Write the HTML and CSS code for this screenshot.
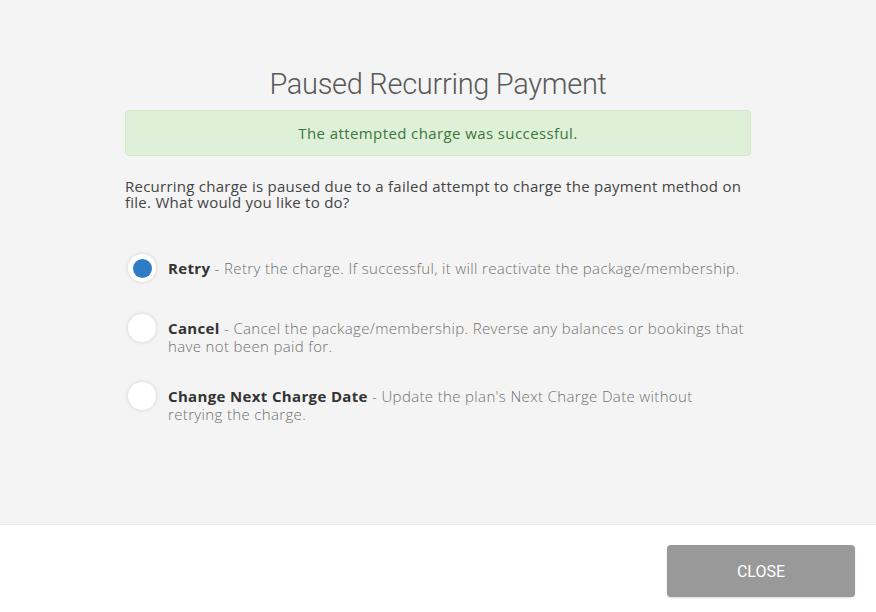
FILE: index.html
```html
<!DOCTYPE html>
<html>
<head>
<meta charset="utf-8">
<link rel="stylesheet" href="styles.css">
</head>
<body>
<div class="modal">
  <div class="modal-body">
    <div class="content">
      <h1 class="title">Paused Recurring Payment</h1>
      <div class="alert">The attempted charge was successful.</div>
      <p class="intro">Recurring charge is paused due to a failed attempt to charge the payment method on file. What would you like to do?</p>
      <div class="options">
        <label class="option">
          <span class="radio checked"><span class="dot"></span></span>
          <span class="text"><b>Retry</b> - Retry the charge. If successful, it will reactivate the package/membership.</span>
        </label>
        <label class="option">
          <span class="radio"></span>
          <span class="text"><b>Cancel</b> - Cancel the package/membership. Reverse any balances or bookings that have not been paid for.</span>
        </label>
        <label class="option">
          <span class="radio"></span>
          <span class="text"><b>Change Next Charge Date</b> - Update the plan's Next Charge Date without retrying the charge.</span>
        </label>
      </div>
    </div>
  </div>
  <div class="modal-footer">
    <button class="close-btn">CLOSE</button>
  </div>
</div>
</body>
</html>
```
FILE: styles.css
```css
* { box-sizing: border-box; }
html, body { margin: 0; padding: 0; }
body {
  font-family: "Open Sans", "Liberation Sans", sans-serif;
  background: #fff;
  width: 876px;
  height: 612px;
  overflow: hidden;
}
.modal {
  display: flex;
  flex-direction: column;
  height: 612px;
}
.modal-body {
  background: #f4f4f4;
  height: 525px;
  border-bottom: 1px solid #ebebeb;
  padding-top: 64px;
}
.content {
  width: 626px;
  margin: 0 auto;
}
.title {
  margin: 0;
  font-family: Roboto, "Liberation Sans", sans-serif;
  font-weight: 300;
  font-size: 29px;
  line-height: 40px;
  color: #595959;
  text-align: center;
  letter-spacing: -0.3px;
}
.alert {
  margin-top: 6px;
  height: 46px;
  background: #dff0d8;
  border: 1px solid #d6e9c6;
  border-radius: 4px;
  color: #3c763d;
  font-size: 15px;
  letter-spacing: 0.4px;
  display: flex;
  align-items: center;
  justify-content: center;
}
.intro {
  margin: 22px 0 0;
  font-size: 15px;
  line-height: 16px;
  letter-spacing: 0.25px;
  color: #444;
}
.options {
  margin-top: 49px;
  display: flex;
  flex-direction: column;
  gap: 32px;
}
.option {
  display: flex;
  align-items: flex-start;
  gap: 12px;
  min-height: 28px;
}
.radio {
  flex: none;
  width: 28px;
  height: 28px;
  margin-left: 3px;
  border-radius: 50%;
  background: #fff;
  box-shadow: 0 0 4px rgba(0,0,0,0.14);
  margin-top: -5px;
  display: flex;
  align-items: center;
  justify-content: center;
}
.dot {
  width: 19px;
  height: 19px;
  border-radius: 50%;
  background: #2e7bc6;
}
.text {
  font-size: 15px;
  line-height: 18px;
  letter-spacing: 0.35px;
  color: #707070;
  font-weight: 300;
}
.text b {
  color: #333;
  font-weight: 700;
}
.modal-footer {
  flex: 1;
  display: flex;
  justify-content: flex-end;
  align-items: flex-start;
  padding: 20px 21px 0 0;
}
.close-btn {
  width: 188px;
  height: 52px;
  background: #999;
  border: none;
  border-radius: 4px;
  color: #fff;
  font-family: Roboto, "Liberation Sans", sans-serif;
  font-size: 16px;
  box-shadow: 0 1px 2px rgba(0,0,0,0.15);
}
```
